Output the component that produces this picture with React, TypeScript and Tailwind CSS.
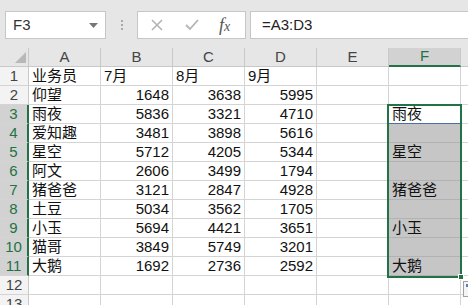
import React from 'react';

const FONT = '"Liberation Sans", "Noto Sans CJK SC", sans-serif';

type Cell = string | number | null;

const rows: Cell[][] = [
  ['业务员', '7月', '8月', '9月', null, null],
  ['仰望', 1648, 3638, 5995, null, null],
  ['雨夜', 5836, 3321, 4710, null, '雨夜'],
  ['爱知趣', 3481, 3898, 5616, null, null],
  ['星空', 5712, 4205, 5344, null, '星空'],
  ['阿文', 2606, 3499, 1794, null, null],
  ['猪爸爸', 3121, 2847, 4928, null, '猪爸爸'],
  ['土豆', 5034, 3562, 1705, null, null],
  ['小玉', 5694, 4421, 3651, null, '小玉'],
  ['猫哥', 3849, 5749, 3201, null, null],
  ['大鹅', 1692, 2736, 2592, null, '大鹅'],
  [null, null, null, null, null, null],
  [null, null, null, null, null, null],
];

const cols = ['A', 'B', 'C', 'D', 'E', 'F'];

function Toolbar() {
  return (
    <div className="h-[48px] bg-[#e6e6e6] flex items-start pt-[11px] pl-[5px]">
      <div className="w-[101px] h-[28px] bg-white border border-[#c6c6c6] flex items-center justify-between pl-[7px] pr-[7px]">
        <span className="text-[15px] text-[#333]">F3</span>
        <svg width="9" height="5" viewBox="0 0 9 5">
          <polygon points="0,0 9,0 4.5,5" fill="#777" />
        </svg>
      </div>
      <div className="w-[31px] h-[28px] flex flex-col items-center justify-center gap-[2px]">
        <span className="w-[2px] h-[2px] bg-[#a8a8a8]" />
        <span className="w-[2px] h-[2px] bg-[#a8a8a8]" />
        <span className="w-[2px] h-[2px] bg-[#a8a8a8]" />
      </div>
      <div className="w-[109px] h-[28px] bg-white border border-[#c6c6c6] flex items-center">
        <svg width="12" height="12" viewBox="0 0 12 12" className="ml-[13px]">
          <path d="M1 1 L11 11 M11 1 L1 11" stroke="#b4b4b4" strokeWidth="1.6" />
        </svg>
        <svg width="14" height="12" viewBox="0 0 14 12" className="ml-[22px]">
          <path d="M1 6 L5 10 L13 1" stroke="#b4b4b4" strokeWidth="1.8" fill="none" />
        </svg>
        <span className="ml-[20px] text-[18px] leading-none italic text-[#555]" style={{ fontFamily: '"Liberation Serif", serif' }}>
          f<span className="text-[14px]">x</span>
        </span>
      </div>
      <div className="ml-[4px] flex-1 h-[28px] bg-white border border-[#c6c6c6] border-r-0 flex items-center pl-[11px]">
        <span className="text-[15px] text-[#222]">=A3:D3</span>
      </div>
    </div>
  );
}

function HeaderRow() {
  return (
    <div className="flex h-[19px]">
      <div className="w-[29px] shrink-0 bg-[#e6e6e6] border-r border-b border-[#c8c8c8] relative">
        <svg width="11" height="11" viewBox="0 0 11 11" className="absolute right-[2px] bottom-[3px]">
          <polygon points="11,0 11,11 0,11" fill="#b8b8b8" />
        </svg>
      </div>
      {cols.map((c) => {
        const sel = c === 'F';
        return (
          <div
            key={c}
            className={`w-[72px] shrink-0 flex items-center justify-center text-[15px] border-r border-[#c8c8c8] ${
              sel ? 'bg-[#d2d2d2] text-[#217346] border-b-2 border-b-[#217346]' : 'bg-[#e6e6e6] text-[#444] border-b border-b-[#c8c8c8]'
            }`}
          >
            {c}
          </div>
        );
      })}
      <div className="flex-1 bg-[#e6e6e6] border-b border-[#c8c8c8]" />
    </div>
  );
}

function GridRow({ cells, index }: { cells: Cell[]; index: number }) {
  const rowNo = index + 1;
  const selRow = rowNo >= 3 && rowNo <= 11;
  return (
    <div className="flex h-[19px]">
      <div
        className={`w-[29px] shrink-0 flex items-center justify-center text-[15px] border-b border-[#d4d4d4] ${
          selRow
            ? 'bg-[#d2d2d2] text-[#217346] border-r-2 border-r-[#217346]'
            : 'bg-[#f3f3f3] text-[#444] border-r border-r-[#c8c8c8]'
        }`}
      >
        {rowNo}
      </div>
      {cells.map((v, i) => {
        const inF = i === 5 && selRow;
        const active = i === 5 && rowNo === 3;
        const bg = inF && !active ? 'bg-[#c6c6c6] border-[#b2b2b2]' : 'bg-white border-[#d4d4d4]';
        const bottom = active ? 'border-b-[#4a6fa5]' : '';
        return (
          <div
            key={i}
            className={`w-[72px] shrink-0 border-r border-b ${bg} ${bottom} flex items-center px-[3px] text-[15px] text-[#111] ${
              typeof v === 'number' ? 'justify-end' : 'justify-start'
            }`}
          >
            {v}
          </div>
        );
      })}
      <div className="flex-1 bg-white border-b border-[#d4d4d4]" />
    </div>
  );
}

export default function App() {
  return (
    <div className="w-[468px] h-[305px] overflow-hidden bg-white relative" style={{ fontFamily: FONT }}>
      <Toolbar />
      <HeaderRow />
      {rows.map((r, i) => (
        <GridRow key={i} cells={r} index={i} />
      ))}

      {/* selection F3:F11 */}
      <div className="absolute left-[387px] top-[104px] w-[75px] h-[174px] border-2 border-[#217346] pointer-events-none" />
      <div className="absolute left-[458px] top-[274px] w-[6px] h-[6px] bg-[#217346] border border-white" />
      {/* paste options tag */}
      <div className="absolute left-[463px] top-[281px] w-[10px] h-[16px] bg-[#f4f4f4] border border-[#a0a0a0]">
        <div className="ml-[2px] mt-[2px] w-[5px] h-[3px] bg-[#5a7fc0]" />
      </div>
    </div>
  );
}
